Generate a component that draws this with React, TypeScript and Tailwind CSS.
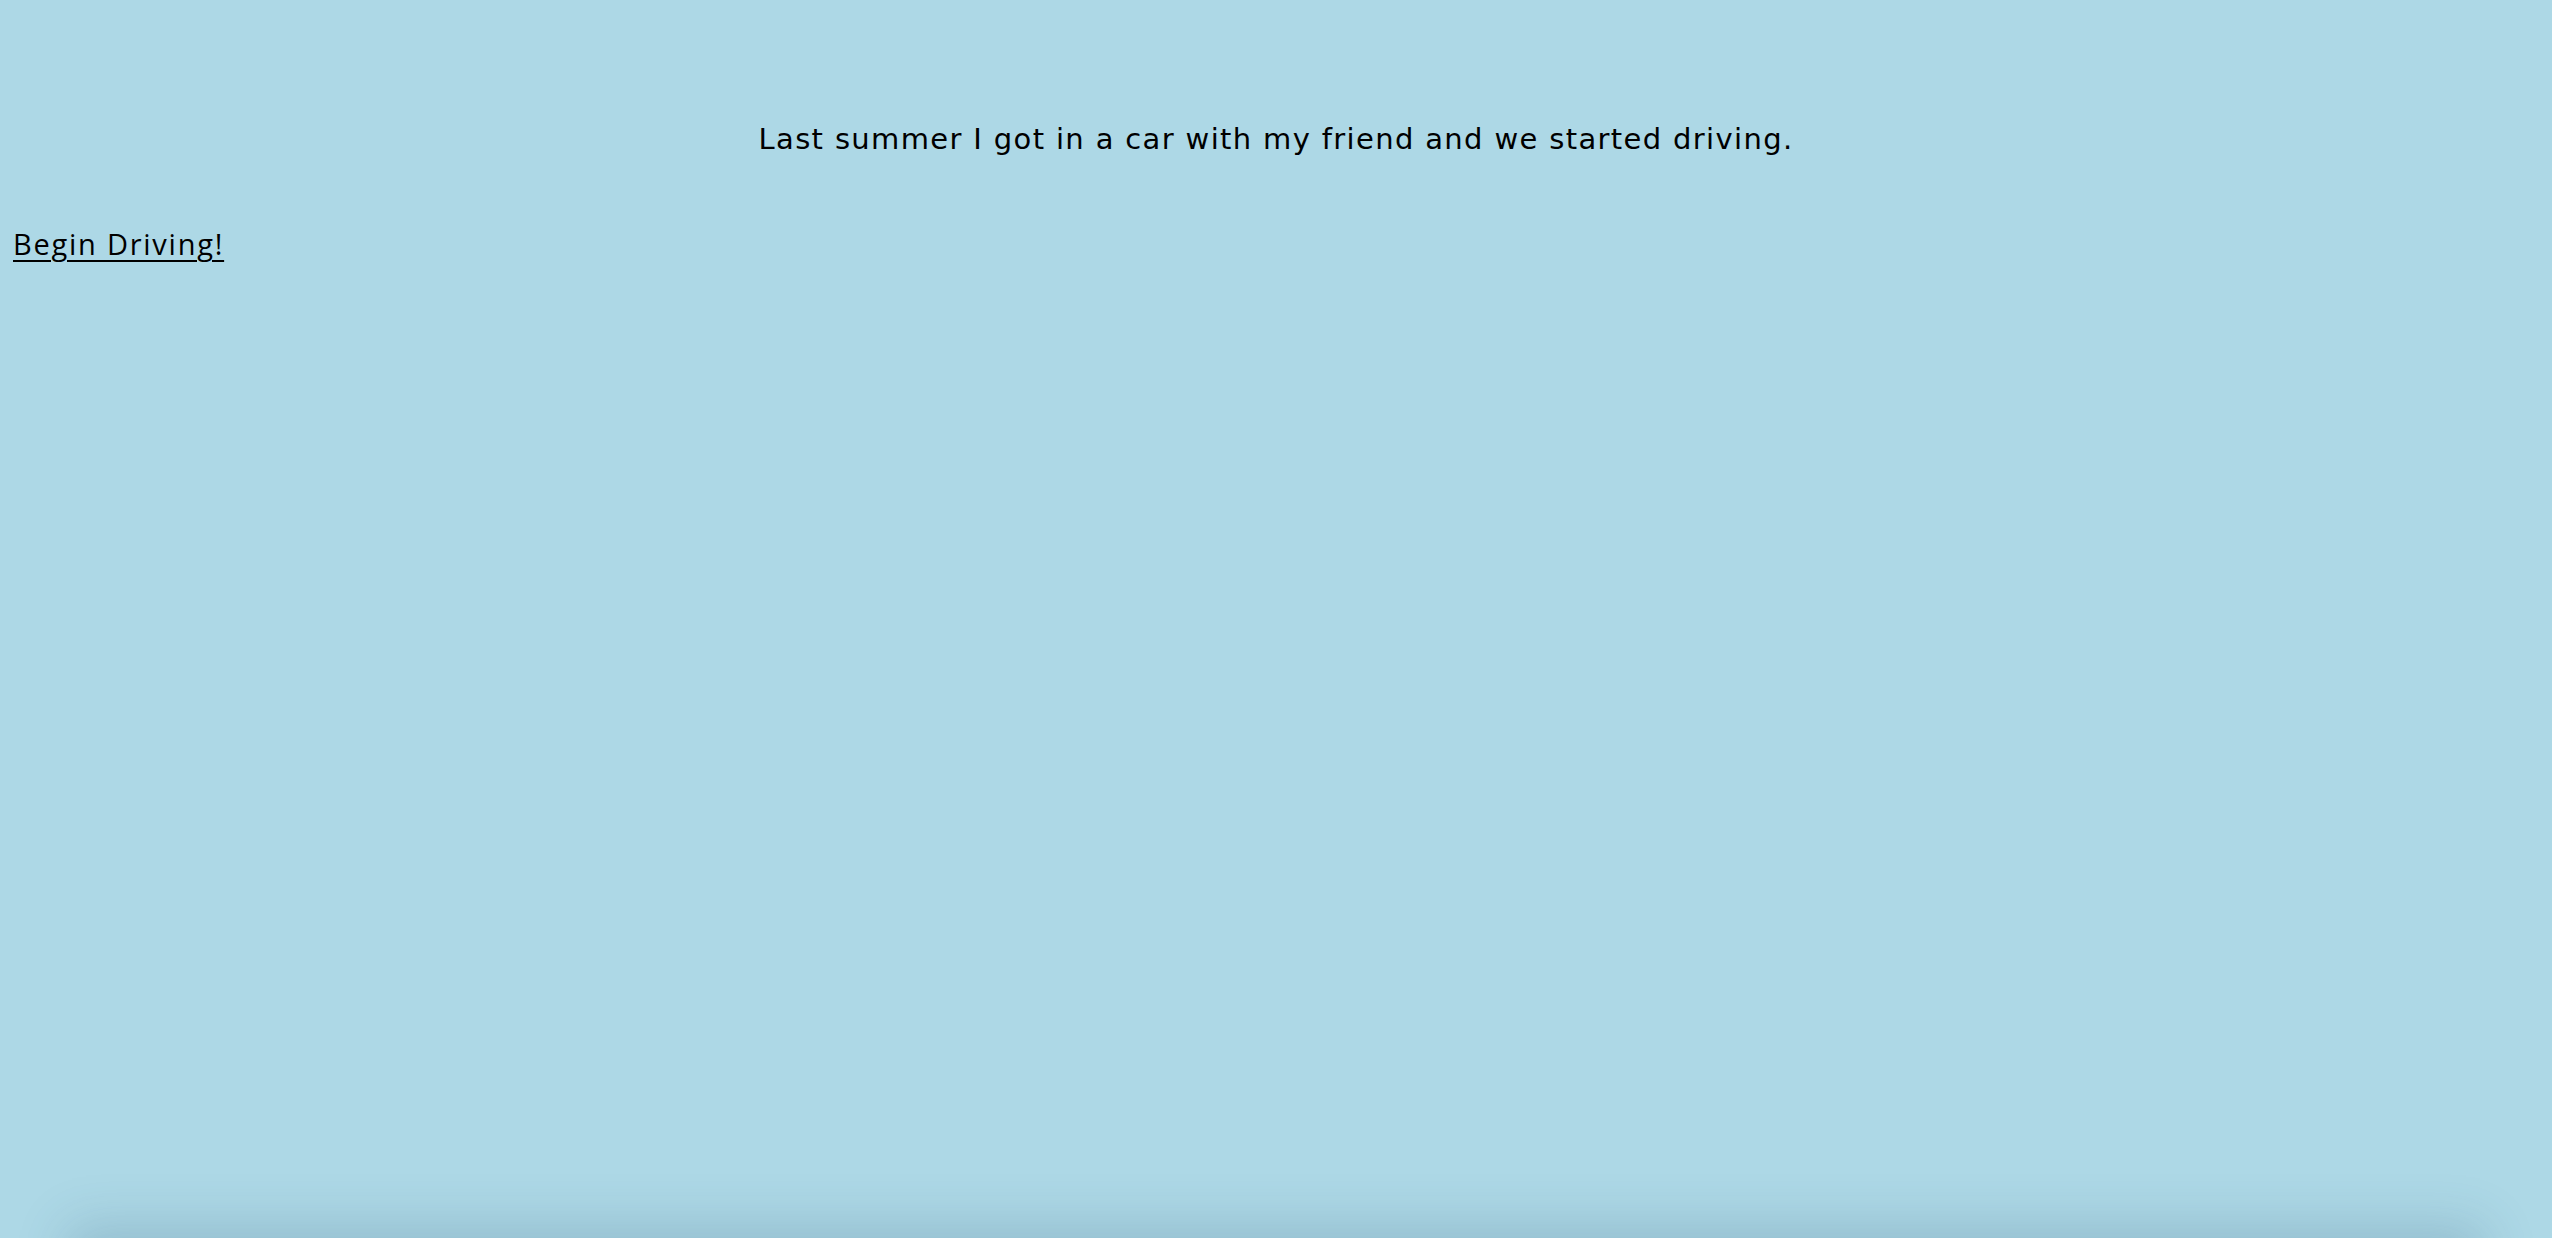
export default function App() {
    return (
        <div className="h-[1238px] overflow-hidden bg-[#add8e6] text-black">
            <section className="flex h-[1238px] flex-col">
                <p className="mt-[119px] text-center text-[29px] leading-[40px] tracking-[1.35px] font-['DejaVu_Sans',sans-serif]">
                    Last summer I got in a car with my friend and we started driving.
                </p>
                <div className="mt-[65px] pl-[13px]">
                    <a href="#" className="text-[29px] leading-[40px] tracking-[1.75px] underline underline-offset-[5px] decoration-2 font-['Open_Sans',sans-serif]">
                        Begin Driving!
                    </a>
                </div>
            </section>
            <div className="mx-[80px] h-[300px] shadow-[0_0_50px_12px_rgba(40,80,110,0.2)] bg-[#add8e6]" />
        </div>
    );
}
